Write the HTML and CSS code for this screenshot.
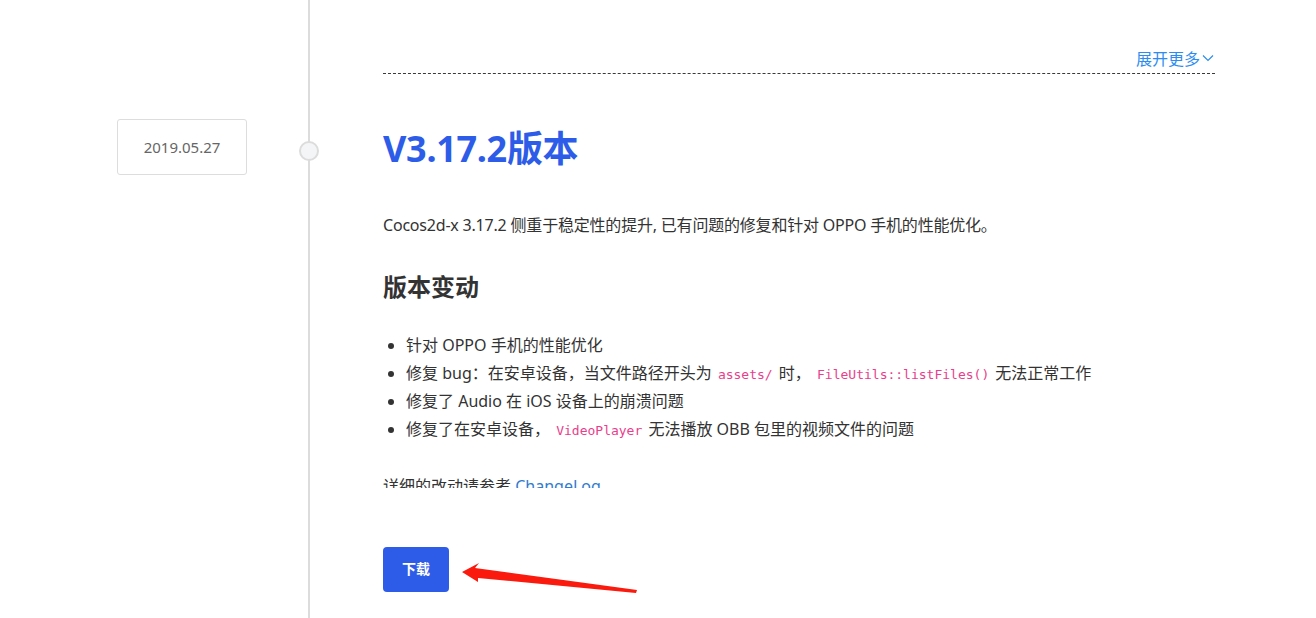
FILE: index.html
```html
<!DOCTYPE html>
<html lang="zh-CN">
<head>
    <meta charset="UTF-8">
    <meta name="viewport" content="width=device-width, initial-scale=1.0">
    <title>版本更新</title>
    <link rel="stylesheet" href="styles.css">
</head>
<body>
    <div class="page">
        <div class="side">
            <div class="date">2019.05.27</div>
        </div>
        <div class="rail"><span class="dot"></span></div>
        <div class="main">
            <div class="more">
                <a class="more-link">展开更多<svg class="chevron" width="12" height="8" viewBox="0 0 12 8"><polyline points="1,1.5 6,6.5 11,1.5" fill="none" stroke="currentColor" stroke-width="1.2"/></svg></a>
            </div>
            <div class="article">
                <h1>V3.17.2版本</h1>
                <p class="intro">Cocos2d-x 3.17.2 侧重于稳定性的提升, 已有问题的修复和针对 OPPO 手机的性能优化。</p>
                <h2>版本变动</h2>
                <ul>
                    <li>针对 OPPO 手机的性能优化</li>
                    <li>修复 bug：在安卓设备，当文件路径开头为 <code>assets/</code> 时， <code>FileUtils::listFiles()</code> 无法正常工作</li>
                    <li>修复了 Audio 在 iOS 设备上的崩溃问题</li>
                    <li>修复了在安卓设备， <code>VideoPlayer</code> 无法播放 OBB 包里的视频文件的问题</li>
                </ul>
                <p class="changelog">详细的改动请参考 <a href="#">ChangeLog</a></p>
            </div>
            <button class="btn">下载</button>
        </div>
        <svg class="arrow" width="190" height="45" viewBox="455 555 190 45">
            <polygon points="462,572 479,563 475,568 637,590 636,593 478,578 478,582" fill="#fa1a0e"/>
        </svg>
    </div>
</body>
</html>
```

FILE: styles.css
```css
body {
    margin: 0;
    padding: 0;
    background: #ffffff;
    color: #333333;
    font-family: "Noto Sans", "Noto Sans CJK SC", sans-serif;
}
.page {
    display: flex;
    min-height: 618px;
    position: relative;
}
.side {
    width: 308px;
    flex-shrink: 0;
}
.date {
    margin: 119px 0 0 117px;
    width: 130px;
    height: 56px;
    box-sizing: border-box;
    border: 1px solid #dddddd;
    border-radius: 3px;
    display: flex;
    align-items: center;
    justify-content: center;
    font-size: 15px;
    color: #666666;
}
.rail {
    width: 2px;
    background-color: #dcdcdc;
    position: relative;
    flex-shrink: 0;
}
.dot {
    position: absolute;
    top: 141px;
    left: -9px;
    width: 20px;
    height: 20px;
    box-sizing: border-box;
    border-radius: 50%;
    border: 2px solid #dcdcdc;
    background-color: #f4f5f7;
}
.main {
    padding-left: 73px;
    width: 832px;
}
.more {
    padding-top: 47px;
    padding-bottom: 2px;
    height: 24px;
    text-align: right;
    border-bottom: 1px dashed #3a3a3a;
}
.more-link {
    font-size: 16px;
    line-height: 24px;
    color: #2d8cf0;
    cursor: pointer;
}
.chevron {
    margin-left: 2px;
    margin-right: 1px;
    vertical-align: 3px;
}
.article {
    height: 414px;
    overflow: hidden;
}
h1 {
    margin: 50px 0 0;
    font-size: 36px;
    line-height: 50px;
    font-weight: 700;
    letter-spacing: -0.3px;
    color: #2d5de8;
}
.intro {
    margin: 39px 0 0;
    font-size: 16px;
    line-height: 24px;
    letter-spacing: -0.2px;
}
h2 {
    margin: 32px 0 0;
    font-size: 24px;
    line-height: 36px;
    font-weight: 700;
}
ul {
    margin: 26px 0 0;
    padding-left: 23px;
    font-size: 16px;
    line-height: 28px;
}
code {
    font-family: "DejaVu Sans Mono", monospace;
    font-size: 13px;
    line-height: 1;
    color: #e83e8c;
    padding: 0 2px;
}
.changelog {
    margin: 31px 0 0;
    font-size: 16px;
    line-height: 24px;
}
.changelog a {
    color: #2f7bd0;
    text-decoration: none;
}
.btn {
    margin-top: 59px;
    width: 66px;
    height: 45px;
    padding: 0 0 3px;
    border: none;
    border-radius: 4px;
    background-color: #2d5de8;
    color: #ffffff;
    font-family: "Noto Sans CJK SC", sans-serif;
    font-size: 14px;
    font-weight: 700;
    cursor: pointer;
}
.arrow {
    position: absolute;
    left: 455px;
    top: 555px;
}
```
